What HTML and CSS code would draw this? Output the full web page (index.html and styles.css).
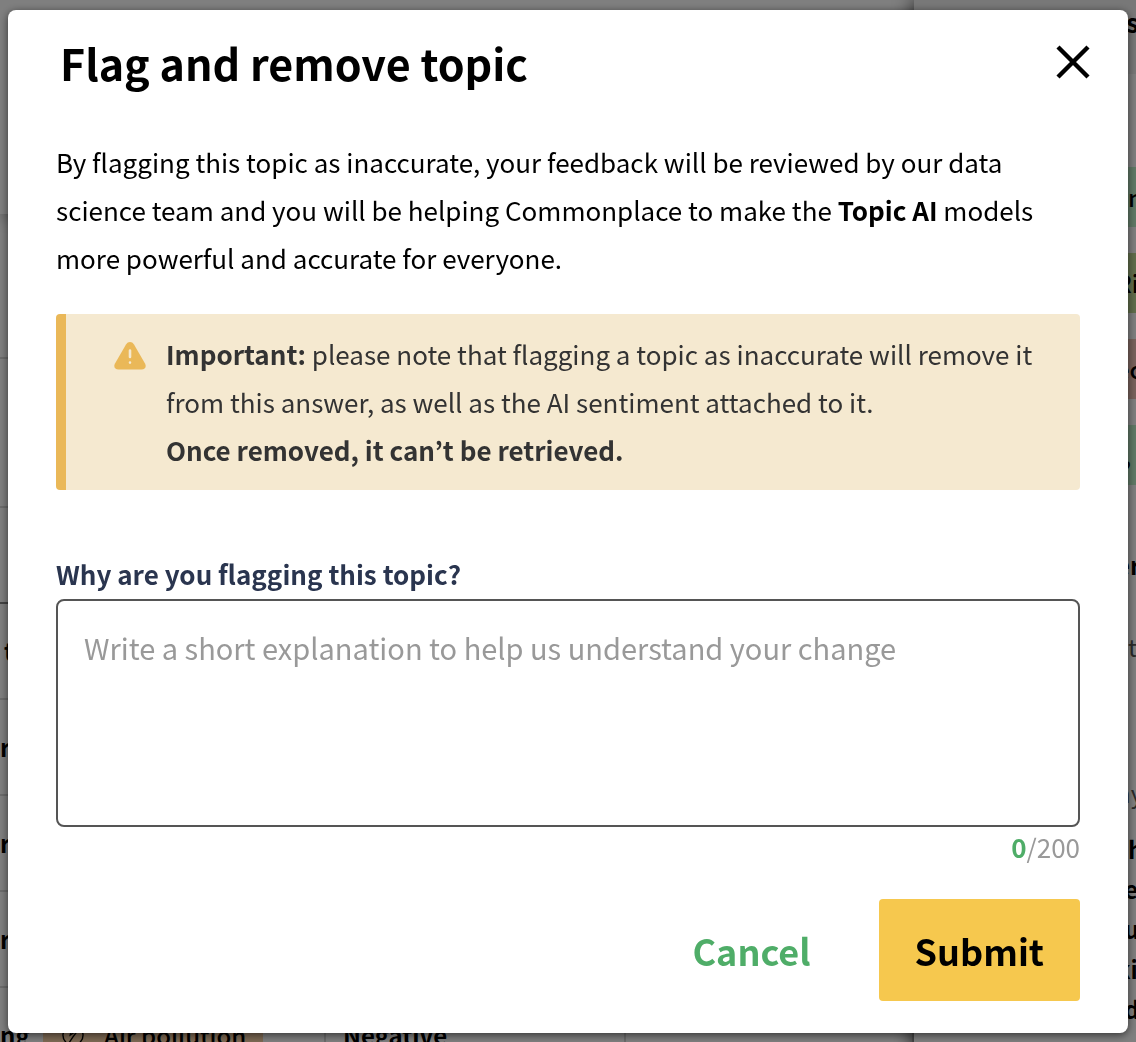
FILE: index.html
```html
<!DOCTYPE html>
<html lang="en">
<head>
    <meta charset="UTF-8">
    <title>Flag and remove topic</title>
    <link rel="stylesheet" href="styles.css">
</head>
<body>
    <div class="page">
        <div class="main">
            <div class="toolbar"></div>
            <table class="answers">
                <colgroup>
                    <col class="col-name">
                    <col class="col-topic">
                    <col class="col-sentiment">
                    <col>
                </colgroup>
                <tr class="filters"><td colspan="4"></td></tr>
                <tr class="tall"><td colspan="4"></td></tr>
                <tr class="head"><td colspan="4"></td></tr>
                <tr><td class="indent">t</td><td></td><td></td><td></td></tr>
                <tr><td>r</td><td></td><td></td><td></td></tr>
                <tr><td>r</td><td></td><td></td><td></td></tr>
                <tr><td>r</td><td></td><td></td><td></td></tr>
                <tr class="ruled">
                    <td>ng</td>
                    <td>
                        <span class="chip">
                            <svg width="22" height="22" viewBox="0 0 24 24" fill="none" stroke="#000" stroke-width="1.5">
                                <circle cx="12" cy="12" r="11"/>
                                <path d="M5 9l5-2-1 5 9-6-6 8-4 6"/>
                            </svg>
                            Air pollution
                        </span>
                    </td>
                    <td>Negative</td>
                    <td></td>
                </tr>
            </table>
        </div>
        <div class="side">
            <div class="side-head">s</div>
            <ul class="tags">
                <li class="green inset">n</li>
                <li class="olive outset">Ri</li>
                <li class="red outset">ec</li>
                <li class="green">, '</li>
            </ul>
            <h2 class="outset">er</h2>
            <p class="meta inset">t</p>
            <p class="meta outset">ny</p>
            <p class="answer"><span class="inset">h</span><br>e<br>u<br><span class="outset">ki</span><br>d</p>
        </div>
    </div>

    <div class="overlay">
        <form class="modal" role="dialog" aria-labelledby="title">
            <div class="modal-header">
                <h1 id="title">Flag and remove topic</h1>
                <button type="button" class="close" aria-label="Close">
                    <svg width="34" height="34" viewBox="0 0 34 34" stroke="#000" stroke-width="4.4">
                        <path d="M2 2l30 30M32 2L2 32"/>
                    </svg>
                </button>
            </div>
            <p class="intro">By flagging this topic as inaccurate, your feedback will be reviewed by our data science team and you will be helping Commonplace to make the <b>Topic AI</b> models more powerful and accurate for everyone.</p>
            <div class="notice">
                <svg width="32" height="28" viewBox="0 0 32 28">
                    <path fill="#eab858" d="M12 2.500C14-.8 18-.8 20 2.500L31 21.500C32.800 24.800 31 27.500 27.500 27.500H4.500C1 27.500-.8 24.800 1 21.500Z"/>
                    <path stroke="#f5e9d0" stroke-width="2.600" stroke-linecap="round" d="M16 8.500v6.500M16 20.500v.1"/>
                </svg>
                <p><b>Important:</b> please note that flagging a topic as inaccurate will remove it from this answer, as well as the AI sentiment attached to it.<br><b>Once removed, it can’t be retrieved.</b></p>
            </div>
            <label for="reason">Why are you flagging this topic?</label>
            <textarea id="reason" maxlength="200" placeholder="Write a short explanation to help us understand your change"></textarea>
            <div class="counter"><b>0</b>/200</div>
            <div class="buttons">
                <button type="button" class="cancel">Cancel</button>
                <button type="submit" class="submit">Submit</button>
            </div>
        </form>
    </div>
</body>
</html>
```
FILE: styles.css
```css
* {
    box-sizing: border-box;
}
body {
    margin: 0;
    height: 100vh;
    overflow: hidden;
    background-color: #fff;
    color: #000;
    font-family: "Noto Sans CJK JP", "Noto Sans", sans-serif;
    font-size: 26px;
    line-height: 48px;
}
h1, h2, p, ul {
    margin: 0;
    padding: 0;
}
button, textarea {
    font-family: inherit;
    border: none;
    background: none;
    padding: 0;
}

/* page behind the dialog */
.page {
    display: grid;
    grid-template-columns: 1fr 222px;
    height: 100vh;
    overflow: hidden;
}
.main {
    min-width: 0;
}
.toolbar {
    height: 214px;
    box-shadow: 0 4px 16px rgba(0, 0, 0, 0.3);
}
.answers {
    width: 100%;
    table-layout: fixed;
    border-collapse: collapse;
    font-size: 24px;
    font-weight: 700;
}
.col-name {
    width: 25px;
}
.col-topic, .col-sentiment {
    width: 300px;
}
.answers td {
    height: 96px;
    padding: 0;
    border-bottom: 2px solid #d8d8d8;
    white-space: nowrap;
}
.answers .filters td {
    height: 144px;
}
.answers .tall td {
    height: 149px;
}
.answers .head td {
    border-bottom-color: #888;
}
.answers .indent {
    padding-left: 4px;
}
.answers .ruled td {
    border-right: 2px solid #d8d8d8;
}
.answers .ruled td + td {
    padding-left: 17px;
}
.chip {
    display: inline-flex;
    align-items: center;
    gap: 20px;
    height: 60px;
    padding: 0 17px 0 19px;
    background-color: #fbd3a8;
    font-weight: 500;
    vertical-align: middle;
}
.side {
    position: relative;
    padding-left: 210px;
    background-color: #fff;
    box-shadow: 0 0 20px rgba(0, 0, 0, 0.8);
    font-weight: 700;
    white-space: nowrap;
}
.side-head {
    height: 74px;
    margin-left: -210px;
    padding-left: 212px;
    background-color: #f0f0f0;
    line-height: 44px;
}
.tags {
    display: flex;
    flex-direction: column;
    gap: 26px;
    padding: 93px 0 56px;
    list-style: none;
}
.tags li {
    height: 60px;
    line-height: 60px;
    font-size: 24px;
    font-weight: 500;
}
.side .inset {
    padding-left: 4px;
}
.side .outset {
    margin-left: -8px;
}
.green {
    background-color: #c2f3cd;
}
.olive {
    background-color: #c2da98;
}
.red {
    background-color: #f2c5b9;
}
.side h2 {
    height: 82px;
    font-size: 24px;
}
.meta {
    height: 146px;
    color: #555;
    font-size: 24px;
    font-weight: 400;
}
.meta + .meta {
    height: 60px;
}
.answer {
    font-size: 24px;
    line-height: 40px;
}

/* dialog */
.overlay {
    position: fixed;
    inset: 0;
    padding: 10px 8px 8px;
    background-color: rgba(0, 0, 0, 0.5);
}
.modal {
    display: flex;
    flex-direction: column;
    padding: 20px 48px 32px;
    border-radius: 8px;
    background-color: #fff;
    box-shadow: 0 2px 8px rgba(0, 0, 0, 0.6);
}
.modal-header {
    display: flex;
    justify-content: space-between;
    align-items: center;
    margin: 0 -10px 44px 4px;
}
.modal-header h1 {
    font-size: 43px;
    line-height: 64px;
}
.close {
    display: flex;
    cursor: pointer;
}
.notice {
    display: flex;
    align-items: flex-start;
    gap: 20px;
    margin: 32px 0 60px;
    padding: 16px 32px 16px 48px;
    border-left: 10px solid #eab858;
    border-radius: 4px;
    background-color: #f5e9d0;
    color: #333;
}
.notice svg {
    flex: none;
    margin-top: 12px;
}
.modal label {
    margin-bottom: 1px;
    color: #2a354f;
    font-weight: 700;
}
.modal textarea {
    height: 228px;
    padding: 22px 26px;
    border: 2px solid #555;
    border-radius: 8px;
    font-size: 29px;
    line-height: 48px;
    resize: none;
}
.modal textarea::placeholder {
    color: #999;
}
.counter {
    color: #999;
    line-height: 40px;
    text-align: right;
}
.counter b {
    color: #4fad68;
}
.buttons {
    display: flex;
    justify-content: flex-end;
    gap: 32px;
    margin-top: 32px;
}
.buttons button {
    height: 102px;
    padding: 0 36px;
    border-radius: 4px;
    font-size: 36px;
    font-weight: 700;
    cursor: pointer;
}
.cancel {
    color: #4fad68;
}
.buttons .submit {
    background-color: #f6c84e;
    color: #000;
}
```
